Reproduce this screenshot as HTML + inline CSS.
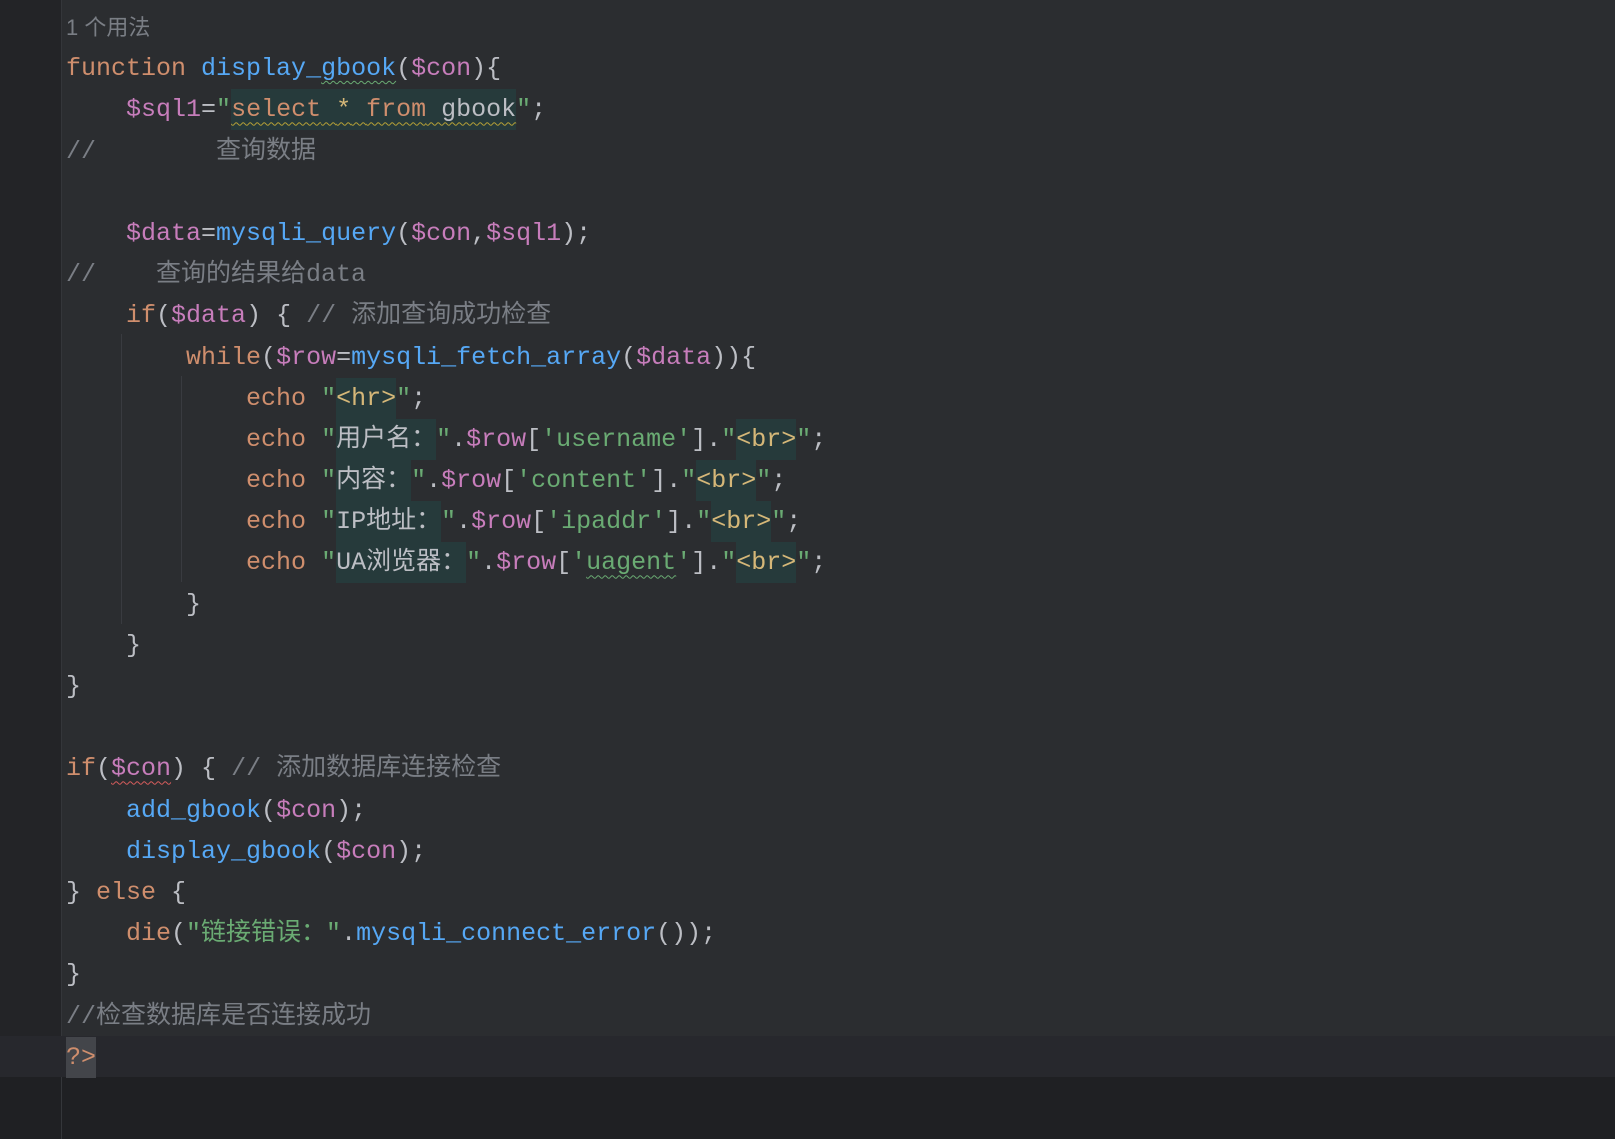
<!DOCTYPE html>
<html><head><meta charset="utf-8"><style>
html,body{margin:0;padding:0;width:1615px;height:1139px;overflow:hidden;background:#1f2023;}
#main{position:absolute;left:0;top:0;width:1615px;height:1036px;background:#2b2d30;}
#gut{position:absolute;left:0;top:0;width:61px;height:1139px;background:#1f2023;border-right:1px solid #34363a;}
#gut2{position:absolute;left:0;top:0;width:61px;height:1036px;background:#232427;}
#cur{position:absolute;left:0;top:1036px;width:1615px;height:41px;background:#27282d;}
.ig{position:absolute;width:1px;background:#393b40;}
#code{position:absolute;left:66px;top:7px;font-family:"Liberation Mono","Noto Sans CJK SC",monospace;font-size:25px;line-height:41.2px;color:#bcbec4;}
.l{height:41.2px;white-space:pre;}
.k{color:#cf8e6d}.f{color:#56a8f5}.v{color:#c77dbb}.s{color:#6aab73}.c{color:#7a7e85}.y{color:#d5b778}
.bg{background:#263a3b;display:inline-block;height:41px;vertical-align:top}
.hint{font-family:"Liberation Sans","Noto Sans CJK SC",sans-serif;font-size:22px;color:#7a7e85}
.wv{text-decoration:underline wavy #b5a036;text-underline-offset:5px;text-decoration-thickness:1px}
.wg{text-decoration:underline wavy #6aab73;text-underline-offset:5px;text-decoration-thickness:1px}
.wr{text-decoration:underline wavy #d65c5c;text-underline-offset:5px;text-decoration-thickness:1px}
.q{background:#43454a;color:#cf8e6d;display:inline-block;height:41px;vertical-align:top}
</style></head><body>
<div id="main"></div><div id="gut"></div><div id="gut2"></div><div id="cur"></div>
<div class="ig" style="left:121px;top:334px;height:290px"></div>
<div class="ig" style="left:181px;top:376px;height:206px"></div>
<div id="code"><div class="l"><span class="hint">1 个用法</span></div><div class="l"><span class="k">function</span> <span class="f">display_<span class="wg">gbook</span></span>(<span class="v">$con</span>){</div><div class="l">    <span class="v">$sql1</span>=<span class="s">"</span><span class="bg wv"><span class="k">select</span> <span class="y">*</span> <span class="k">from</span> gbook</span><span class="s">"</span>;</div><div class="l c">//        查询数据</div><div class="l"></div><div class="l">    <span class="v">$data</span>=<span class="f">mysqli_query</span>(<span class="v">$con</span>,<span class="v">$sql1</span>);</div><div class="l c">//    查询的结果给data</div><div class="l">    <span class="k">if</span>(<span class="v">$data</span>) { <span class="c">// 添加查询成功检查</span></div><div class="l">        <span class="k">while</span>(<span class="v">$row</span>=<span class="f">mysqli_fetch_array</span>(<span class="v">$data</span>)){</div><div class="l">            <span class="k">echo</span> <span class="s">"</span><span class="bg y">&lt;hr&gt;</span><span class="s">"</span>;</div><div class="l">            <span class="k">echo</span> <span class="s">"</span><span class="bg">用户名：</span><span class="s">"</span>.<span class="v">$row</span>[<span class="s">'username'</span>].<span class="s">"</span><span class="bg y">&lt;br&gt;</span><span class="s">"</span>;</div><div class="l">            <span class="k">echo</span> <span class="s">"</span><span class="bg">内容：</span><span class="s">"</span>.<span class="v">$row</span>[<span class="s">'content'</span>].<span class="s">"</span><span class="bg y">&lt;br&gt;</span><span class="s">"</span>;</div><div class="l">            <span class="k">echo</span> <span class="s">"</span><span class="bg">IP地址：</span><span class="s">"</span>.<span class="v">$row</span>[<span class="s">'ipaddr'</span>].<span class="s">"</span><span class="bg y">&lt;br&gt;</span><span class="s">"</span>;</div><div class="l">            <span class="k">echo</span> <span class="s">"</span><span class="bg">UA浏览器：</span><span class="s">"</span>.<span class="v">$row</span>[<span class="s">'<span class="wg">uagent</span>'</span>].<span class="s">"</span><span class="bg y">&lt;br&gt;</span><span class="s">"</span>;</div><div class="l">        }</div><div class="l">    }</div><div class="l">}</div><div class="l"></div><div class="l"><span class="k">if</span>(<span class="v wr">$con</span>) { <span class="c">// 添加数据库连接检查</span></div><div class="l">    <span class="f">add_gbook</span>(<span class="v">$con</span>);</div><div class="l">    <span class="f">display_gbook</span>(<span class="v">$con</span>);</div><div class="l">} <span class="k">else</span> {</div><div class="l">    <span class="k">die</span>(<span class="s">"链接错误："</span>.<span class="f">mysqli_connect_error</span>());</div><div class="l">}</div><div class="l c">//检查数据库是否连接成功</div><div class="l"><span class="q">?&gt;</span></div></div>
</body></html>
